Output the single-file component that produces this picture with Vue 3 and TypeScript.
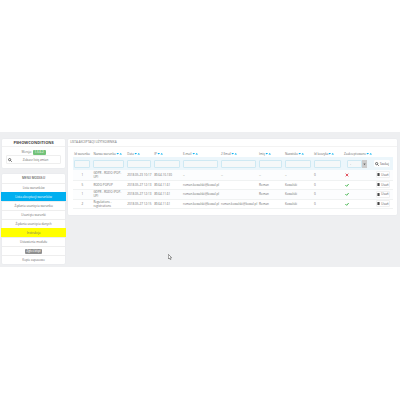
<script setup lang="ts">
interface Column { key: string; label: string; sortable: boolean }
interface Entry {
  id: string; name: string; date: string; ip: string; email: string
  email2: string; first: string; last: string; cart: string; accepted: boolean
}

const columns: Column[] = [
  { key: 'id', label: 'Id warunku', sortable: false },
  { key: 'name', label: 'Nazwa warunku', sortable: true },
  { key: 'date', label: 'Data', sortable: true },
  { key: 'ip', label: 'IP', sortable: true },
  { key: 'email', label: 'E-mail', sortable: true },
  { key: 'email2', label: '2 Email', sortable: true },
  { key: 'first', label: 'Imię', sortable: true },
  { key: 'last', label: 'Nazwisko', sortable: true },
  { key: 'cart', label: 'Id koszyka', sortable: true },
  { key: 'accepted', label: 'Zaakceptowano', sortable: true },
]

const rows: Entry[] = [
  { id: '1', name: 'GDPR - RODO (POP-UP)', date: '2018-05-23 10:17', ip: '89.64.10.130', email: '--', email2: '--', first: '--', last: '--', cart: '0', accepted: false },
  { id: '5', name: 'RODO POPUP', date: '2018-05-27 12:13', ip: '89.64.11.61', email: 'roman.kowalski@kowal.pl', email2: '', first: 'Roman', last: 'Kowalski', cart: '0', accepted: true },
  { id: '1', name: 'GDPR - RODO (POP-UP)', date: '2018-05-27 12:13', ip: '89.64.11.61', email: 'roman.kowalski@kowal.pl', email2: '', first: 'Roman', last: 'Kowalski', cart: '0', accepted: true },
  { id: '2', name: 'Regulations - registrations', date: '2018-05-27 12:15', ip: '89.64.11.61', email: 'roman.kowalski@kowal.pl', email2: 'roman.kowalski@kowal.pl', first: 'Roman', last: 'Kowalski', cart: '0', accepted: true },
]

const menu = [
  { label: 'Lista warunków', kind: '' },
  { label: 'Lista akceptacji warunków', kind: 'active' },
  { label: 'Żądania usunięcia warunku', kind: '' },
  { label: 'Usunięte warunki', kind: '' },
  { label: 'Żądania usunięcia danych', kind: '' },
  { label: 'Instrukcja', kind: 'manual' },
  { label: 'Ustawienia modułu', kind: '' },
  { label: 'Zgłoś błąd', kind: 'report' },
  { label: 'Kopie zapasowe', kind: '' },
]
</script>

<template>
  <main class="page">
    <aside class="sidebar">
      <section class="card">
        <h1 class="brand">PSHOWCONDITIONS</h1>
        <div class="about">
          <p class="version">Wersja: <span class="tag">1.5.6.2</span></p>
          <button class="changes" type="button">
            <svg class="lens" viewBox="0 0 16 16"><circle cx="6.5" cy="6.5" r="4.5" /><path d="M10 10l5 5" /></svg>
            <span>Zobacz listę zmian</span>
          </button>
        </div>
      </section>
      <nav class="card menu">
        <h2 class="menu-title">MENU MODUŁU</h2>
        <a v-for="m in menu" :key="m.label" href="#" class="item" :class="m.kind"><span>{{ m.label }}</span></a>
      </nav>
    </aside>

    <section class="card panel">
      <h2 class="panel-title">LISTA AKCEPTACJI UŻYTKOWNIKA</h2>
      <table class="list">
        <colgroup>
          <col v-for="c in columns" :key="c.key" :class="'w-' + c.key" />
          <col class="w-actions" />
        </colgroup>
        <thead>
          <tr class="heads">
            <th v-for="c in columns" :key="c.key">
              {{ c.label }}<svg v-if="c.sortable" class="sort" viewBox="0 0 12 6"><path d="M1 2h5L3.500 5zM7 5h5L9.500 2z" /></svg>
            </th>
            <th></th>
          </tr>
          <tr class="filters">
            <td v-for="c in columns" :key="c.key">
              <span v-if="c.key === 'accepted'" class="pick">
                <select aria-label="Zaakceptowano"><option>-</option></select>
                <svg class="arrow" viewBox="0 0 8 14"><path d="M2 6h4L4 9z" /></svg>
              </span>
              <input v-else type="text" :aria-label="c.label" />
            </td>
            <td class="actions">
              <button class="search" type="button">
                <svg class="lens" viewBox="0 0 16 16"><circle cx="6.5" cy="6.5" r="4.5" /><path d="M10 10l5 5" /></svg>Szukaj
              </button>
            </td>
          </tr>
        </thead>
        <tbody>
          <tr v-for="(r, i) in rows" :key="i">
            <td class="center">{{ r.id }}</td>
            <td class="wrap">{{ r.name }}</td>
            <td>{{ r.date }}</td>
            <td>{{ r.ip }}</td>
            <td>{{ r.email }}</td>
            <td>{{ r.email2 }}</td>
            <td>{{ r.first }}</td>
            <td>{{ r.last }}</td>
            <td>{{ r.cart }}</td>
            <td class="state">
              <svg v-if="r.accepted" class="mark yes" viewBox="0 0 12 12"><path d="M1 6l4 4 6-7" /></svg>
              <svg v-else class="mark no" viewBox="0 0 12 12"><path d="M2 2l8 8M10 2l-8 8" /></svg>
            </td>
            <td class="actions">
              <button class="remove" type="button">
                <svg class="bin" viewBox="0 0 12 14"><path d="M4 0h4v1h4v2H0V1h4zM1 4h10v10H1z" /></svg>Usuń
              </button>
            </td>
          </tr>
        </tbody>
      </table>
    </section>

    <svg class="cursor" viewBox="0 0 12 18"><path d="M1 1v14l3-3 3 5 2-1-2-5h4z" /></svg>
  </main>
</template>

<style>
body {
  margin: 0;
  background: #fff;
}
</style>

<style scoped>
.page {
  position: relative;
  display: flex;
  align-items: flex-start;
  gap: 3px;
  margin-top: 132px;
  padding: 7px 3px 3px 2px;
  background: #eeeff1;
  color: #6c6c6c;
  font: 3px/4px "Open Sans", "Noto Sans", sans-serif;
}
.page *, .page {
  box-sizing: border-box;
}
h1, h2, p {
  margin: 0;
}
button, input, select {
  font: inherit;
  color: inherit;
  margin: 0;
  padding: 0;
}
svg {
  flex: none;
}
.sidebar {
  display: flex;
  flex: 0 0 16%;
  flex-direction: column;
  gap: 6px;
}
.card {
  background: #fff;
  border-radius: 1px;
  box-shadow: 0 0 1px #d3d8db;
}
.brand {
  height: 8px;
  border-bottom: 1px solid #f1f1f1;
  color: #444;
  font-size: 4px;
  line-height: 7px;
  font-weight: 700;
  text-align: center;
}
.about {
  padding: 2px 4px 4px;
}
.version {
  line-height: 6px;
  text-align: center;
}
.tag {
  display: inline-block;
  padding: 0 2px;
  border-radius: 1px;
  background: #72c279;
  color: #fff;
  line-height: 5px;
}
.changes {
  display: flex;
  align-items: center;
  width: 100%;
  height: 9px;
  padding: 0 1px;
  border: 1px solid #eee;
  border-radius: 1px;
  background: #fff;
}
.changes span {
  flex: 1;
}
.lens {
  width: 4px;
  height: 4px;
  fill: none;
  stroke: #444;
  stroke-width: 3;
}
.menu-title {
  font-size: 3px;
  line-height: 9px;
  font-weight: 600;
  color: #555;
  text-align: center;
}
.item {
  display: block;
  height: 9px;
  border-top: 1px solid #eee;
  color: #6c6c6c;
  line-height: 8px;
  text-align: center;
  text-decoration: none;
}
.item.active {
  margin: 0 -1px;
  border-color: #00aff0;
  background: #00aff0;
  color: #fff;
}
.item.manual {
  margin: 0 -1px;
  border-color: #ff0;
  background: #ff0;
}
.item.report span {
  display: inline-block;
  padding: 0 1px;
  border-radius: 1px;
  background: #909090;
  color: #fff;
  line-height: 5px;
}
.panel {
  flex: 1;
  min-width: 0;
  padding-bottom: 6px;
}
.panel-title {
  height: 8px;
  padding-left: 2px;
  border-bottom: 1px solid #f3f3f3;
  font-size: 3px;
  line-height: 7px;
  font-weight: 400;
}
.list {
  width: calc(100% - 9px);
  margin: 0 4px 0 5px;
  border-collapse: collapse;
  table-layout: fixed;
}
.w-id { width: 6%; }
.w-name { width: 10.6%; }
.w-date { width: 8.4%; }
.w-ip { width: 9%; }
.w-email, .w-email2 { width: 11.9%; }
.w-first { width: 8.1%; }
.w-last { width: 9.1%; }
.w-cart { width: 9.4%; }
.w-accepted { width: 8.8%; }
th, td {
  padding: 0 2px 0 1px;
  text-align: left;
  font-weight: 400;
  white-space: nowrap;
  vertical-align: middle;
}
.heads th {
  height: 10px;
  padding-top: 3px;
  padding-right: 0;
}
.sort {
  width: 6px;
  height: 3px;
  fill: #00aff0;
}
.filters td {
  height: 13px;
  background: #ecf6fb;
}
input {
  display: block;
  width: 100%;
  height: 8px;
  border: 1px solid #cfe9f3;
  border-radius: 1px;
  background: #f5f8f9;
}
.pick {
  display: flex;
  width: 20px;
  height: 8px;
  margin-left: 3px;
}
.pick select {
  flex: 1;
  min-width: 0;
  padding-left: 2px;
  border: 1px solid #cfe9f3;
  border-radius: 1px 0 0 1px;
  background: #f5f8f9;
  appearance: none;
}
.arrow {
  width: 5px;
  height: 8px;
  background: #ccc;
  fill: #666;
}
.search, .remove {
  display: inline-flex;
  align-items: center;
  justify-content: center;
  gap: 1px;
  height: 7px;
  border: 1px solid #f0f0f0;
  border-radius: 1px;
  background: #fff;
  color: #555;
  vertical-align: middle;
}
.search {
  width: 16px;
  border-color: #fff;
}
.remove {
  width: 14px;
}
td.actions {
  padding: 0 3px 0 0;
  text-align: right;
}
.bin {
  width: 3px;
  height: 3px;
  fill: #444;
}
tbody td {
  height: 9px;
  border-bottom: 1px solid #f0f2f2;
}
tbody tr:nth-child(odd) td {
  height: 10px;
  background: #fcfdfe;
}
td.center {
  text-align: center;
}
td.wrap {
  padding-right: 4px;
  white-space: normal;
}
.mark {
  display: block;
  width: 4px;
  height: 4px;
  margin-left: 1px;
  fill: none;
  stroke-width: 3;
}
.yes {
  stroke: #4cb856;
}
.no {
  stroke: #e25563;
}
.cursor {
  position: absolute;
  left: 168px;
  top: 122px;
  width: 4px;
  height: 6px;
  fill: #fff;
  stroke: #666;
  stroke-width: 2;
}
</style>
